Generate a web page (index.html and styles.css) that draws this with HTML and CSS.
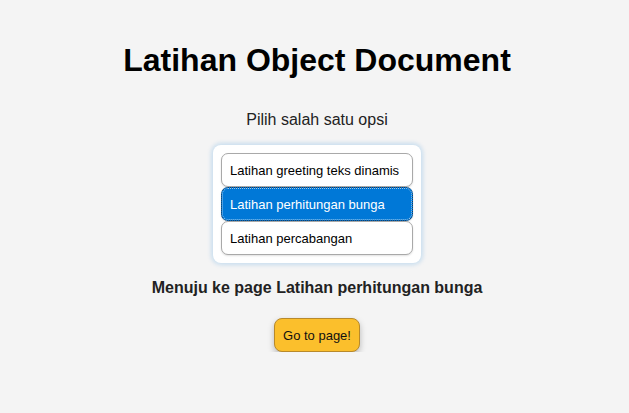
FILE: index.html
```html
<!DOCTYPE html>
<html lang="id">
<head>
<meta charset="utf-8">
<title>Latihan Object Document</title>
<link rel="stylesheet" href="styles.css">
</head>
<body>
<main class="page">
  <h1 class="title">Latihan Object Document</h1>
  <p class="prompt">Pilih salah satu opsi</p>
  <div class="card" role="listbox">
    <div class="option" role="option">Latihan greeting teks dinamis</div>
    <div class="option selected" role="option" aria-selected="true">Latihan perhitungan bunga</div>
    <div class="option" role="option">Latihan percabangan</div>
  </div>
  <p class="target">Menuju ke page Latihan perhitungan bunga</p>
  <button class="go" type="button">Go to page!</button>
</main>
</body>
</html>
```

FILE: styles.css
```css
html, body {
  margin: 0;
  padding: 0;
  background: #f4f4f4;
  font-family: "Liberation Sans", Arial, sans-serif;
  color: #222;
}

.page {
  display: flex;
  flex-direction: column;
  align-items: center;
  padding-top: 42px;
  padding-left: 5px;
}

.title {
  margin: 0;
  font-size: 32px;
  line-height: 37px;
  font-weight: bold;
  color: #000;
}

.prompt {
  margin: 32px 0 0;
  font-size: 16px;
  line-height: 18px;
  color: #222;
}

.card {
  margin-top: 16px;
  width: 192px;
  padding: 8px;
  background: #fff;
  border-radius: 8px;
  box-shadow: 0 0 4px 2px rgba(0, 120, 215, 0.18);
  display: flex;
  flex-direction: column;
}

.option {
  box-sizing: border-box;
  height: 34px;
  padding: 0 8px;
  display: flex;
  align-items: center;
  font-size: 13px;
  color: #000;
  border: 1px solid #a9a9a9;
  border-radius: 7px;
  background: #fff;
  box-shadow: 0 1px 2px rgba(0, 0, 0, 0.12);
}

.option.selected {
  background: #0078d7;
  color: #fff;
  border: 1px dotted #1a3a5a;
  outline: 1px dotted rgba(255, 255, 255, 0.6);
  outline-offset: -2px;
}

.target {
  margin: 16px 0 0;
  font-size: 16px;
  line-height: 18px;
  font-weight: bold;
  color: #222;
}

.go {
  margin-top: 21px;
  box-sizing: border-box;
  height: 34px;
  padding: 0 8px;
  font-family: "Liberation Sans", Arial, sans-serif;
  font-size: 13px;
  color: #111;
  background: #fbbf2c;
  border: 1px solid #b8892a;
  border-radius: 8px;
  box-shadow: 0 3px 6px rgba(0, 0, 0, 0.25);
  cursor: pointer;
}
```
